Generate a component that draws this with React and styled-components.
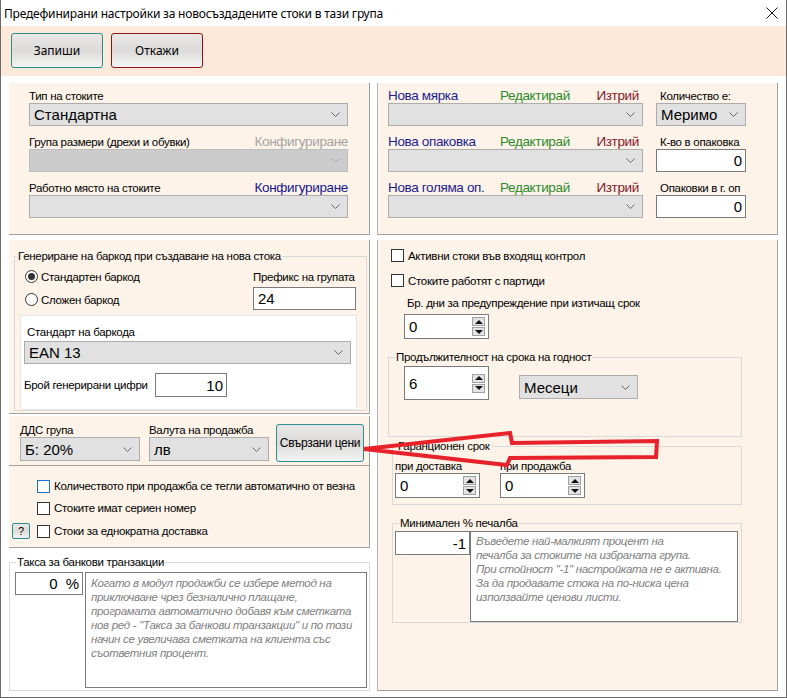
import React from "react";
import styled, { createGlobalStyle } from "styled-components";

const GlobalStyle = createGlobalStyle`
  html, body { margin: 0; padding: 0; background: #fff; }
  body {
    font-family: "Liberation Sans", Arial, sans-serif;
    font-size: 12px;
    color: #000;
  }
  * { box-sizing: border-box; }
`;

const Window = styled.div`
  position: relative;
  width: 787px;
  height: 698px;
  background: #fff;
  border-left: 1px solid #6a6a6a;
  border-right: 1px solid #6a6a6a;
  border-bottom: 1px solid #6a6a6a;
  overflow: hidden;
`;

const TitleBar = styled.div`
  height: 26px;
  display: flex;
  align-items: center;
  justify-content: space-between;
  padding: 0 8px 0 3px;
  background: #fff;
`;

const Title = styled.span`
  font-family: "Noto Sans", "Open Sans", sans-serif;
  font-size: 12px;
  letter-spacing: -0.2px;
`;

const Toolbar = styled.div`
  height: 50px;
  display: flex;
  gap: 8px;
  padding: 7px 10px;
  background: #fde9d9;
`;

const ActionButton = styled.div`
  width: ${(p) => p.$w || 92}px;
  height: ${(p) => p.$h || 35}px;
  display: flex;
  align-items: center;
  justify-content: center;
  border: 1px solid ${(p) => p.$border};
  border-radius: 3px;
  background: linear-gradient(to bottom, #e9e8e6 0%, #dcdbd9 50%, #f4f4f4 100%);
  font-family: ${(p) => (p.$plain ? '"Liberation Sans", Arial, sans-serif' : '"Noto Sans", "Open Sans", sans-serif')};
  font-size: ${(p) => p.$size || 12}px;
  letter-spacing: ${(p) => (p.$plain ? "-0.3px" : "0")};
  flex: none;
`;

const Body = styled.div`
  display: grid;
  grid-template-columns: 361px 401px;
  grid-template-rows: 152px auto;
  column-gap: 7px;
  row-gap: 5px;
  padding: 7px 0 0 8px;
`;

const Panel = styled.div`
  background: ${(p) => p.$bg || "#fdf3e9"};
  border-right: 1px solid #a0a0a0;
  border-bottom: 1px solid #a0a0a0;
`;

/* top-left */
const TypePanel = styled(Panel)`
  display: flex;
  flex-direction: column;
  gap: 9px;
  padding: 6px 0 0 20px;
`;

const Field = styled.div`
  display: flex;
  flex-direction: column;
  width: ${(p) => p.$w}px;
`;

const FieldHead = styled.div`
  height: 14px;
  display: flex;
  align-items: flex-end;
  justify-content: space-between;
`;

const Label = styled.span`
  font-size: 11.5px;
  line-height: 14px;
  letter-spacing: -0.3px;
  white-space: nowrap;
`;

const LinkText = styled.span`
  font-size: 13.5px;
  line-height: 14px;
  letter-spacing: -0.35px;
  color: ${(p) => p.$color};
  white-space: nowrap;
`;

const SelectBox = styled.div`
  display: flex;
  align-items: center;
  justify-content: space-between;
  width: ${(p) => p.$w}px;
  height: ${(p) => p.$h || 23}px;
  padding: 0 7px 0 4px;
  background: ${(p) => (p.$disabled ? "#cccccc" : "#e1e1e1")};
  border: 1px solid ${(p) => (p.$disabled ? "#bdbdbd" : "#adadad")};
  font-size: 15px;
  flex: none;
`;

const Chevron = ({ color }) => (
  <svg width="9" height="5" viewBox="0 0 9 5">
    <polyline points="0.5,0.5 4.5,4.5 8.5,0.5" fill="none" stroke={color} strokeWidth="1" />
  </svg>
);

function Select({ w, h, value, disabled }) {
  return (
    <SelectBox $w={w} $h={h} $disabled={disabled}>
      <span>{value}</span>
      <Chevron color={disabled ? "#a9a9a9" : "#666"} />
    </SelectBox>
  );
}

const TextBox = styled.div`
  display: flex;
  align-items: center;
  justify-content: ${(p) => (p.$right ? "flex-end" : "flex-start")};
  width: ${(p) => p.$w}px;
  height: ${(p) => p.$h || 23}px;
  padding: 0 3px 0 4px;
  background: #fff;
  border: 1px solid #7a7a7a;
  font-size: 15px;
  flex: none;
`;

const Percent = styled.span`
  margin-left: 8px;
`;

/* top-right */
const UnitsPanel = styled(Panel)`
  display: flex;
  flex-direction: column;
  gap: 9px;
  padding: 6px 0 0 10px;
  border-left: 1px solid #b4b4b4;
`;

const UnitRow = styled.div`
  display: grid;
  grid-template-columns: 255px 90px;
  grid-template-rows: 14px 23px;
  column-gap: 13px;
`;

const UnitHead = styled.div`
  display: flex;
  align-items: flex-end;
  padding-right: 4px;
`;

const UnitName = styled(LinkText)`
  width: 112px;
`;

const Grow = styled.span`
  flex: 1;
`;

const SideLabel = styled(Label)`
  align-self: end;
  padding-left: 4px;
`;

/* left column */
const LeftColumn = styled.div`
  display: flex;
  flex-direction: column;
`;

const BarcodePanel = styled(Panel)`
  height: 174px;
  padding: 9px 0 0 5px;
  margin-bottom: 2px;
`;

const GroupBox = styled.fieldset`
  margin: ${(p) => p.$m || "0"};
  padding: 0;
  width: ${(p) => p.$w}px;
  border: 1px solid #d9d9d9;
  min-width: 0;
`;

const GroupTitle = styled.legend`
  padding: 0 1px;
  margin-left: ${(p) => p.$indent ?? 2}px;
  font-size: 11.5px;
  line-height: 14px;
  letter-spacing: -0.3px;
`;

const BarcodeTop = styled.div`
  display: flex;
  justify-content: space-between;
  padding: 2px 10px 0 10px;
`;

const RadioList = styled.div`
  display: flex;
  flex-direction: column;
`;

const OptionRow = styled.div`
  display: flex;
  align-items: center;
  gap: ${(p) => p.$gap || 3}px;
  height: ${(p) => p.$h || 23}px;
  padding-left: ${(p) => p.$indent || 0}px;
`;

const RadioCircle = styled.span`
  width: 13px;
  height: 13px;
  border-radius: 50%;
  border: 1px solid #333;
  background: #fff;
  display: flex;
  align-items: center;
  justify-content: center;
  flex: none;
  &::after {
    content: "";
    width: 7px;
    height: 7px;
    border-radius: 50%;
    background: ${(p) => (p.$on ? "#333" : "transparent")};
  }
`;

const CheckBox = styled.span`
  width: 13px;
  height: 13px;
  border: 1px solid ${(p) => (p.$focus ? "#1a6fd4" : "#333")};
  background: #fff;
  flex: none;
`;

const PrefixField = styled.div`
  display: flex;
  flex-direction: column;
  gap: 3px;
  width: 103px;
  padding-top: 5px;
`;

const StandardBox = styled.div`
  margin: 4px 0 0 5px;
  width: 337px;
  height: 95px;
  background: #fff;
  border: 1px solid #e6e6e6;
  padding: 9px 0 0 3px;
  display: flex;
  flex-direction: column;
`;

const StandardLabel = styled(Label)`
  padding-left: 3px;
  margin-bottom: 2px;
`;

const DigitsRow = styled.div`
  display: flex;
  align-items: center;
  margin-top: 9px;
`;

const DigitsLabel = styled(Label)`
  width: 131px;
`;

const TaxPanel = styled(Panel)`
  height: 50px;
  display: flex;
  align-items: flex-start;
  gap: 9px;
  padding: 7px 0 0 11px;
`;

const LinkedButton = styled(ActionButton)`
  margin: 1px 0 0 -2px;
`;

const FlagsPanel = styled(Panel)`
  height: 82px;
  padding: 9px 0 0 3px;
  display: grid;
  grid-template-columns: 25px auto;
  grid-template-rows: 22px 22px 24px;
  align-items: center;
`;

const HelpButton = styled(ActionButton)`
  border-radius: 2px;
`;

const BankPanel = styled.div`
  flex: 1;
  margin-top: 2px;
  padding-top: 5px;
  background: #fff;
`;

const GroupContent = styled.div`
  display: flex;
  align-items: ${(p) => p.$align || "flex-start"};
  gap: ${(p) => p.$gap || 0}px;
  padding: ${(p) => p.$pad};
`;

const Note = styled.div`
  width: ${(p) => p.$w}px;
  height: ${(p) => p.$h}px;
  border: 1px solid #7a7a7a;
  background: #fff;
  padding: ${(p) => p.$pad};
  font-style: italic;
  font-size: 11.5px;
  line-height: 14px;
  letter-spacing: -0.3px;
  color: #808080;
  white-space: pre;
  overflow: hidden;
  flex: none;
`;

/* right column */
const ExtrasPanel = styled(Panel)`
  height: 451px;
  display: flex;
  flex-direction: column;
  align-items: flex-start;
  padding: 3px 0 0 10px;
  border-left: 1px solid #b4b4b4;
`;

const WarnLabel = styled(Label)`
  margin: 3px 0 0 19px;
`;

const SpinFrame = styled.div`
  display: flex;
  align-items: center;
  width: 85px;
  height: ${(p) => p.$h || 25}px;
  margin: ${(p) => p.$m || "0"};
  padding: 0 3px 0 4px;
  background: #fff;
  border: 1px solid #7a7a7a;
  font-size: 15px;
  flex: none;
`;

const SpinValue = styled.span`
  flex: 1;
`;

const SpinButtons = styled.div`
  display: flex;
  flex-direction: column;
  gap: 1px;
`;

const SpinButton = styled.div`
  width: 13px;
  height: 9px;
  background: #e3e3e3;
  border: 1px solid #a0a0a0;
  display: flex;
  align-items: center;
  justify-content: center;
  &::after {
    content: "";
    width: 0;
    height: 0;
    border-left: 4px solid transparent;
    border-right: 4px solid transparent;
    ${(p) => (p.$down ? "border-top: 4px solid #111;" : "border-bottom: 4px solid #111;")}
  }
`;

function Spin({ value, h, m }) {
  return (
    <SpinFrame $h={h} $m={m}>
      <SpinValue>{value}</SpinValue>
      <SpinButtons>
        <SpinButton />
        <SpinButton $down />
      </SpinButtons>
    </SpinFrame>
  );
}

const MonthsSelect = styled.div`
  margin: 9px 0 0 30px;
`;

const WarrantyColumn = styled.div`
  display: flex;
  flex-direction: column;
`;

const CloseIcon = () => (
  <svg width="12" height="12" viewBox="0 0 12 12">
    <path d="M0.5 0.5 L11.5 11.5 M11.5 0.5 L0.5 11.5" stroke="#111" strokeWidth="1" />
  </svg>
);

const Overlay = styled.svg`
  position: absolute;
  left: -1px;
  top: 0;
  pointer-events: none;
`;

const Annotation = () => (
  <Overlay width="787" height="698" viewBox="0 0 787 698">
    <path
      d="M364 449 L510 433 L512 443 L657 441 L656 457 L510 458 L507 465 Z"
      fill="none"
      stroke="#e8222b"
      strokeWidth="4"
      strokeLinejoin="miter"
    />
  </Overlay>
);

const units = [
  { name: "Нова мярка", side: "Количество е:", select: "Меримо" },
  { name: "Нова опаковка", side: "К-во в опаковка", value: "0" },
  { name: "Нова голяма оп.", side: "Опаковки в г. оп", value: "0" },
];

export default function App() {
  return (
    <>
      <GlobalStyle />
      <Window>
        <TitleBar>
          <Title>Предефинирани настройки за новосъздадените стоки в тази група</Title>
          <CloseIcon />
        </TitleBar>
        <Toolbar>
          <ActionButton $border="#2a8c8c">Запиши</ActionButton>
          <ActionButton $border="#8b1414">Откажи</ActionButton>
        </Toolbar>

        <Body>
          <TypePanel>
            <Field $w={319}>
              <FieldHead>
                <Label>Тип на стоките</Label>
              </FieldHead>
              <Select w={319} value="Стандартна" />
            </Field>
            <Field $w={319}>
              <FieldHead>
                <Label>Група размери (дрехи и обувки)</Label>
                <LinkText $color="#a3a3a3">Конфигуриране</LinkText>
              </FieldHead>
              <Select w={319} disabled />
            </Field>
            <Field $w={319}>
              <FieldHead>
                <Label>Работно място на стоките</Label>
                <LinkText $color="#17168c">Конфигуриране</LinkText>
              </FieldHead>
              <Select w={319} />
            </Field>
          </TypePanel>

          <UnitsPanel>
            {units.map((u) => (
              <UnitRow key={u.name}>
                <UnitHead>
                  <UnitName $color="#1c1c8e">{u.name}</UnitName>
                  <LinkText $color="#2b8a2b">Редактирай</LinkText>
                  <Grow />
                  <LinkText $color="#85182b">Изтрий</LinkText>
                </UnitHead>
                <SideLabel>{u.side}</SideLabel>
                <Select w={255} />
                {u.select ? (
                  <Select w={90} value={u.select} />
                ) : (
                  <TextBox $w={90} $right>
                    {u.value}
                  </TextBox>
                )}
              </UnitRow>
            ))}
          </UnitsPanel>

          <LeftColumn>
            <BarcodePanel>
              <GroupBox $w={353}>
                <GroupTitle>Генериране на баркод при създаване на нова стока</GroupTitle>
                <BarcodeTop>
                  <RadioList>
                    <OptionRow>
                      <RadioCircle $on />
                      <Label>Стандартен баркод</Label>
                    </OptionRow>
                    <OptionRow>
                      <RadioCircle />
                      <Label>Сложен баркод</Label>
                    </OptionRow>
                  </RadioList>
                  <PrefixField>
                    <Label>Префикс на групата</Label>
                    <TextBox $w={103}>24</TextBox>
                  </PrefixField>
                </BarcodeTop>
                <StandardBox>
                  <StandardLabel>Стандарт на баркода</StandardLabel>
                  <Select w={327} value="EAN 13" />
                  <DigitsRow>
                    <DigitsLabel>Брой генерирани цифри</DigitsLabel>
                    <TextBox $w={72} $h={24} $right>
                      10
                    </TextBox>
                  </DigitsRow>
                </StandardBox>
              </GroupBox>
            </BarcodePanel>

            <TaxPanel>
              <Field $w={120}>
                <Label>ДДС група</Label>
                <Select w={120} h={24} value="Б: 20%" />
              </Field>
              <Field $w={120}>
                <Label>Валута на продажба</Label>
                <Select w={120} h={24} value="лв" />
              </Field>
              <LinkedButton $border="#2a8c8c" $w={88} $h={38} $plain>
                Свързани цени
              </LinkedButton>
            </TaxPanel>

            <FlagsPanel>
              <span />
              <OptionRow $gap={4}>
                <CheckBox $focus />
                <Label>Количеството при продажба се тегли автоматично от везна</Label>
              </OptionRow>
              <span />
              <OptionRow $gap={4}>
                <CheckBox />
                <Label>Стоките имат сериен номер</Label>
              </OptionRow>
              <HelpButton $border="#2a8c8c" $w={18} $h={16} $size={11} $plain>
                ?
              </HelpButton>
              <OptionRow $gap={4}>
                <CheckBox />
                <Label>Стоки за еднократна доставка</Label>
              </OptionRow>
            </FlagsPanel>

            <BankPanel>
              <GroupBox $w={361}>
                <GroupTitle $indent={6}>Такса за банкови транзакции</GroupTitle>
                <GroupContent $gap={2} $pad="3px 2px 2px 5px">
                  <TextBox $w={68} $right>
                    0<Percent>%</Percent>
                  </TextBox>
                  <Note $w={282} $h={116} $pad="3px 5px">
                    {`Когато в модул продажби се избере метод на
приключване чрез безналично плащане,
програмата автоматично добавя към сметката
нов ред - "Такса за банкови транзакции" и по този
начин се увеличава сметката на клиента със
съответния процент.`}
                  </Note>
                </GroupContent>
              </GroupBox>
            </BankPanel>
          </LeftColumn>

          <ExtrasPanel>
            <OptionRow $h={25} $indent={3} $gap={4}>
              <CheckBox />
              <Label>Активни стоки във входящ контрол</Label>
            </OptionRow>
            <OptionRow $h={25} $indent={3} $gap={4}>
              <CheckBox />
              <Label>Стоките работят с партиди</Label>
            </OptionRow>
            <WarnLabel>Бр. дни за предупреждение при изтичащ срок</WarnLabel>
            <Spin value="0" m="4px 0 0 16px" />

            <GroupBox $w={354} $m="11px 0 0 0">
              <GroupTitle $indent={6}>Продължителност на срока на годност</GroupTitle>
              <GroupContent $pad="2px 0 36px 15px">
                <Spin value="6" h={34} />
                <MonthsSelect>
                  <Select w={119} h={24} value="Месеци" />
                </MonthsSelect>
              </GroupContent>
            </GroupBox>

            <GroupBox $w={350} $m="2px 0 0 4px">
              <GroupTitle $indent={4}>Гаранционен срок</GroupTitle>
              <GroupContent $gap={20} $pad="6px 0 6px 2px">
                <WarrantyColumn>
                  <Label>при доставка</Label>
                  <Spin value="0" />
                </WarrantyColumn>
                <WarrantyColumn>
                  <Label>при продажба</Label>
                  <Spin value="0" />
                </WarrantyColumn>
              </GroupContent>
            </GroupBox>

            <GroupBox $w={350} $m="11px 0 0 4px">
              <GroupTitle $indent={6}>Минимален % печалба</GroupTitle>
              <GroupContent $pad="1px 2px 0 2px">
                <TextBox $w={75} $h={24} $right>
                  -1
                </TextBox>
                <Note $w={268} $h={91} $pad="2px 5px">
                  {`Въведете най-малкият процент на
печалба за стоките на избраната група.
При стойност "-1" настройката не е активна.
За да продавате стока на по-ниска цена
използвайте ценови листи.`}
                </Note>
              </GroupContent>
            </GroupBox>
          </ExtrasPanel>
        </Body>
        <Annotation />
      </Window>
    </>
  );
}
